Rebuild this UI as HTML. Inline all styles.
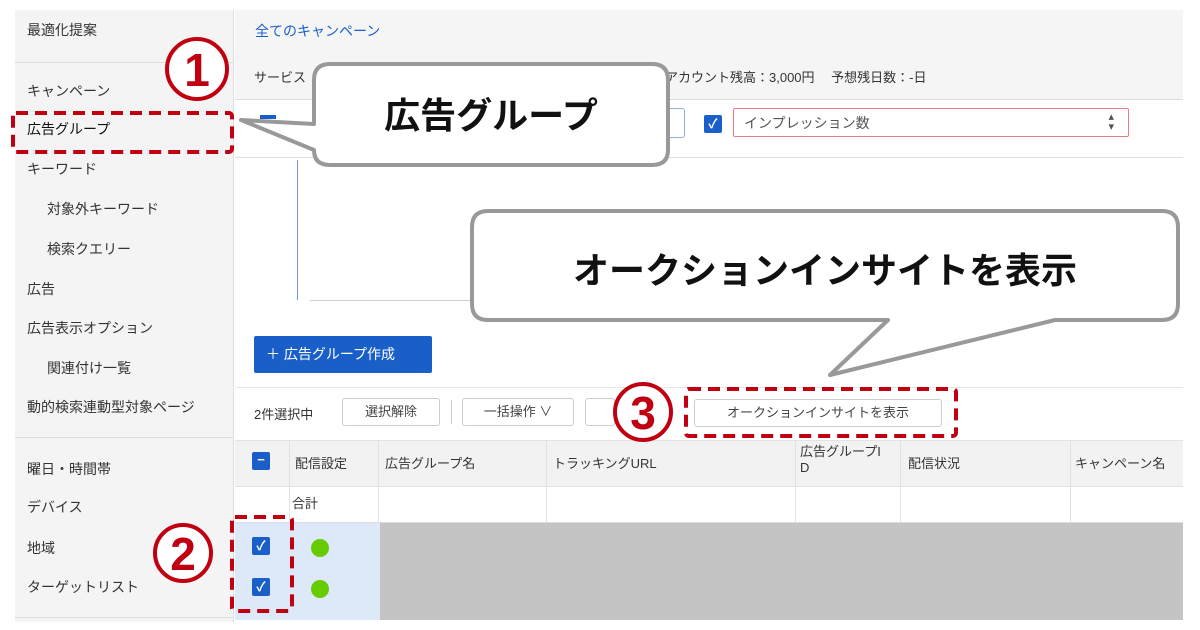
<!DOCTYPE html>
<html><head><meta charset="utf-8"><style>
*{margin:0;padding:0;box-sizing:border-box}
body{width:1200px;height:630px;background:#fff;position:relative;overflow:hidden;font-family:"Liberation Sans","Noto Sans CJK JP",sans-serif;color:#333}
.a{position:absolute;white-space:nowrap}
.s{font-size:14px}
.side{left:15px;top:10px;width:219px;height:612px;background:#f4f4f4;border-right:1px solid #ddd}
.hl{position:absolute;height:1px;background:#ddd}
.vl{position:absolute;width:1px;background:#e2e2e2}
.cb{position:absolute;width:18px;height:18px;background:#1a5fc8;border-radius:2px;color:#fff;font-size:13px;line-height:18px;text-align:center;font-weight:bold}
.dot{position:absolute;width:18px;height:18px;border-radius:50%;background:#6c0}
.btn{position:absolute;border:1px solid #ccc;background:#fff;border-radius:3px;font-size:13px;color:#444;text-align:center}
</style></head><body>
<div class="a side"></div>
<div class="a s" style="left:27px;top:20px">最適化提案</div>
<div class="hl" style="left:15px;top:62px;width:219px"></div>
<div class="a s" style="left:27px;top:81px">キャンペーン</div>
<div class="a s" style="left:27px;top:119px;color:#111">広告グループ</div>
<div class="a s" style="left:27px;top:159px">キーワード</div>
<div class="a s" style="left:47px;top:199px">対象外キーワード</div>
<div class="a s" style="left:47px;top:239px">検索クエリー</div>
<div class="a s" style="left:27px;top:279px">広告</div>
<div class="a s" style="left:27px;top:318px">広告表示オプション</div>
<div class="a s" style="left:47px;top:358px">関連付け一覧</div>
<div class="a s" style="left:27px;top:397px">動的検索連動型対象ページ</div>
<div class="hl" style="left:15px;top:437px;width:219px"></div>
<div class="a s" style="left:27px;top:459px">曜日・時間帯</div>
<div class="a s" style="left:27px;top:497px">デバイス</div>
<div class="a s" style="left:27px;top:538px">地域</div>
<div class="a s" style="left:27px;top:577px">ターゲットリスト</div>
<div class="hl" style="left:15px;top:617px;width:219px"></div>

<div class="a" style="left:235px;top:10px;width:948px;height:90px;background:#f5f5f5;border-bottom:1px solid #ddd"></div>
<div class="a" style="left:255px;top:21px;font-size:14px;color:#1a5fc8">全てのキャンペーン</div>
<div class="a" style="left:254px;top:67px;font-size:13px">サービス</div>
<div class="a" style="left:665px;top:67px;font-size:13px">アカウント残高：3,000円　 予想残日数：-日</div>
<div class="a" style="left:260px;top:115px;width:16px;height:4px;background:#1a5fc8"></div>
<div class="a" style="left:660px;top:108px;width:25px;height:30px;border:1px solid #8ab0e8;border-left:none;border-radius:3px"></div>
<div class="cb" style="left:704px;top:115px">✓</div>
<div class="a" style="left:733px;top:108px;width:396px;height:29px;border:1px solid #e87a8a;border-radius:2px;font-size:14px;color:#555;padding:4px 10px">インプレッション数<span style="position:absolute;right:14px;top:3px;font-size:11px;line-height:10px">▴<br>▾</span></div>
<div class="hl" style="left:235px;top:157px;width:948px"></div>
<div class="a" style="left:297px;top:160px;width:1px;height:140px;background:#6a9ae0"></div>
<div class="hl" style="left:310px;top:300px;width:170px;background:#ccc"></div>
<div class="a" style="left:254px;top:336px;width:178px;height:37px;background:#1a5fc8;border-radius:2px;color:#fff;font-size:14px;line-height:37px;padding-left:12px">＋ 広告グループ作成</div>
<div class="hl" style="left:235px;top:387px;width:948px;background:#e6e6e6"></div>
<div class="a" style="left:254px;top:404px;font-size:13px">2件選択中</div>
<div class="btn" style="left:342px;top:398px;width:98px;height:28px;line-height:26px">選択解除</div>
<div class="vl" style="left:451px;top:400px;height:24px;background:#ccc"></div>
<div class="btn" style="left:462px;top:398px;width:112px;height:28px;line-height:26px">一括操作 ∨</div>
<div class="btn" style="left:585px;top:398px;width:30px;height:28px"></div>
<div class="btn" style="left:694px;top:399px;width:248px;height:28px;line-height:26px">オークションインサイトを表示</div>

<div class="a" style="left:235px;top:440px;width:948px;height:47px;background:#f2f2f2;border-top:1px solid #e2e2e2;border-bottom:1px solid #e2e2e2"></div>
<div class="cb" style="left:252px;top:452px;line-height:16px">−</div>
<div class="a" style="left:295px;top:453px;font-size:13px">配信設定</div>
<div class="a" style="left:385px;top:453px;font-size:13px">広告グループ名</div>
<div class="a" style="left:553px;top:453px;font-size:13px">トラッキングURL</div>
<div class="a" style="left:800px;top:444px;font-size:13px;line-height:16px">広告グループI<br>D</div>
<div class="a" style="left:908px;top:453px;font-size:13px">配信状況</div>
<div class="a" style="left:1075px;top:453px;font-size:13px">キャンペーン名</div>
<div class="a" style="left:292px;top:493px;font-size:13px">合計</div>
<div class="vl" style="left:289px;top:440px;height:82px"></div>
<div class="vl" style="left:378px;top:440px;height:82px"></div>
<div class="vl" style="left:546px;top:440px;height:82px"></div>
<div class="vl" style="left:795px;top:440px;height:82px"></div>
<div class="vl" style="left:900px;top:440px;height:82px"></div>
<div class="vl" style="left:1070px;top:440px;height:82px"></div>
<div class="hl" style="left:235px;top:522px;width:948px"></div>
<div class="a" style="left:235px;top:523px;width:145px;height:97px;background:#dde9f8"></div>
<div class="a" style="left:380px;top:523px;width:803px;height:97px;background:#c4c4c4"></div>
<div class="cb" style="left:252px;top:537px">✓</div>
<div class="cb" style="left:252px;top:578px">✓</div>
<div class="dot" style="left:311px;top:539px"></div>
<div class="dot" style="left:311px;top:580px"></div>
<div class="a" style="left:235px;top:620px;width:948px;height:10px;background:#fff"></div>

<svg class="a" style="left:0;top:0" width="1200" height="630">
 <g fill="none" stroke="#c00010" stroke-width="4" stroke-dasharray="12 7">
  <rect x="13" y="113" width="219" height="39" rx="3"/>
  <rect x="232" y="517" width="60" height="94" rx="3"/>
  <rect x="686" y="389" width="270" height="47" rx="3"/>
 </g>
 <g fill="#fff" stroke="#999" stroke-width="4" stroke-linejoin="round">
  <path d="M330 64 H652 Q668 64 668 80 V150 Q668 165 652 165 H330 Q314 165 314 150 L241 120 L314 124 V80 Q314 64 330 64 Z"/>
  <path d="M488 211 H1162 Q1178 211 1178 227 V304 Q1178 320 1162 320 H1055 L830 375 L888 320 H488 Q472 320 472 304 V227 Q472 211 488 211 Z"/>
 </g>
 <g font-family="Liberation Sans,Noto Sans CJK JP,sans-serif" font-weight="bold" fill="#111" text-anchor="middle">
  <text x="491" y="128" font-size="36">広告グループ</text>
  <text x="825" y="283" font-size="36">オークションインサイトを表示</text>
 </g>
 <g fill="#fff" stroke="#c00010" stroke-width="4">
  <circle cx="197" cy="69" r="30"/><circle cx="183" cy="553" r="28"/><circle cx="643" cy="412" r="28"/>
 </g>
 <g font-family="Liberation Sans,sans-serif" font-weight="bold" fill="#c00010" text-anchor="middle" font-size="46">
  <text x="197" y="86">1</text><text x="183" y="570">2</text><text x="643" y="429">3</text>
 </g>
</svg>
</body></html>
